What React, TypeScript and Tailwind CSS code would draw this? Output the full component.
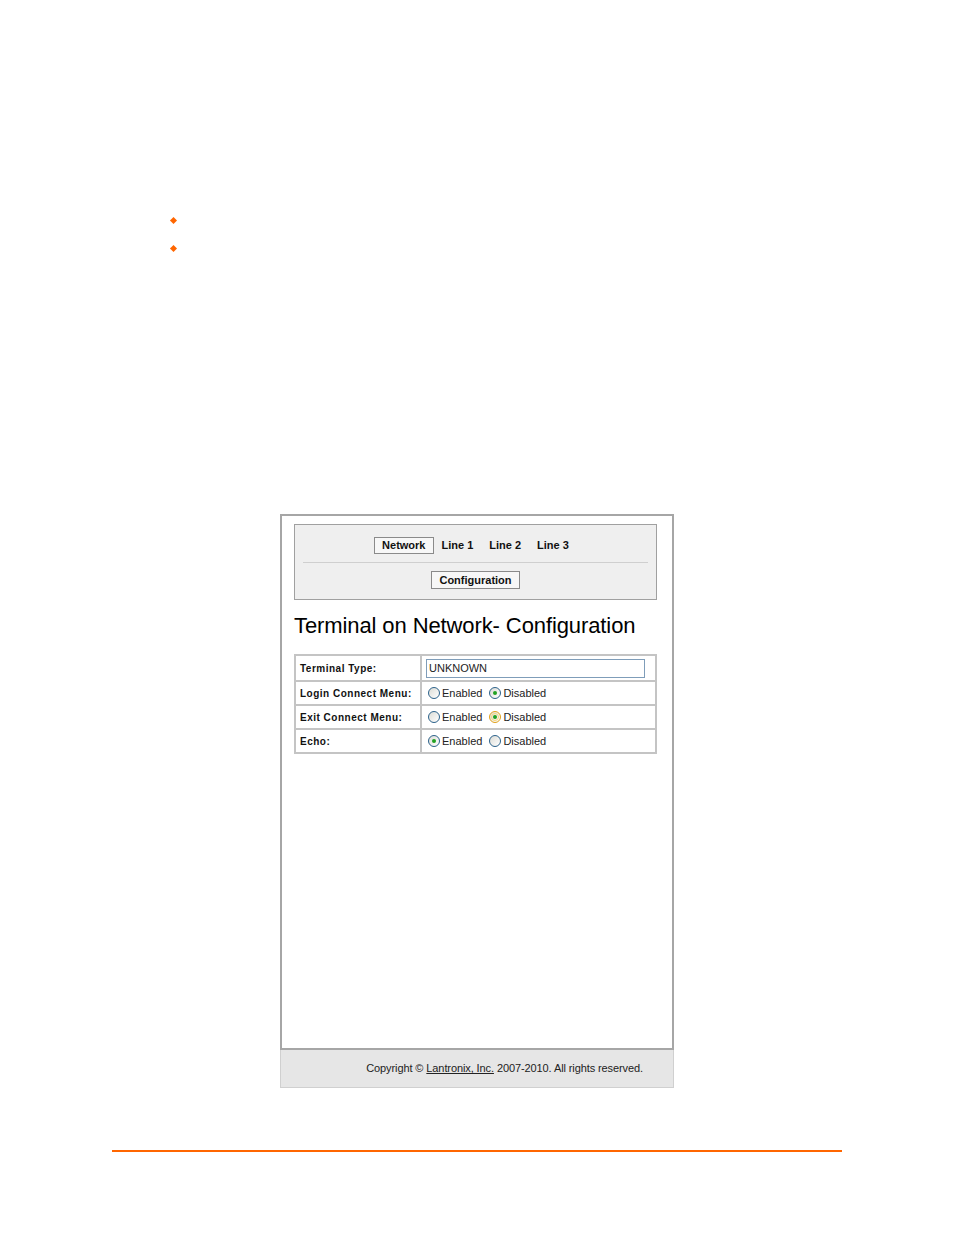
import React from 'react';

const sans = { fontFamily: '"Liberation Sans", Arial, sans-serif' };

type RadioProps = { checked?: boolean; hover?: boolean };

function Radio({ checked, hover }: RadioProps) {
  return (
    <span
      className={`relative flex h-[12px] w-[12px] shrink-0 items-center justify-center rounded-full border ${
        hover ? 'border-[#e3a21a]' : 'border-[#2c628b]'
      } bg-gradient-to-br from-[#dcdcd6] to-white`}
    >
      {hover && <span className="absolute inset-[1px] rounded-full border border-[#f8d575]" />}
      {checked && <span className="relative h-[4px] w-[4px] rounded-full bg-[#21a121]" />}
    </span>
  );
}

function RadioPair({ value, hover }: { value: 'on' | 'off'; hover?: boolean }) {
  return (
    <div className="flex items-center text-[11px] text-[#222]">
      <Radio checked={value === 'on'} />
      <span className="ml-[2px]">Enabled</span>
      <span className="ml-[7px] flex items-center">
        <Radio checked={value === 'off'} hover={hover} />
      </span>
      <span className="ml-[2px]">Disabled</span>
    </div>
  );
}

const rows = [
  { label: 'Login Connect Menu:', value: 'off' as const },
  { label: 'Exit Connect Menu:', value: 'off' as const, hover: true },
  { label: 'Echo:', value: 'on' as const },
];

export default function App() {
  return (
    <div className="min-h-[1235px] w-[954px] bg-white pt-[213px]" style={sans}>
      {/* bullets */}
      <ul className="pl-[171px]">
        <li className="h-[28px] pt-[5px]">
          <div className="h-[5px] w-[5px] rotate-45 bg-[#ff6600]" />
        </li>
        <li className="h-[28px] pt-[5px]">
          <div className="h-[5px] w-[5px] rotate-45 bg-[#ff6600]" />
        </li>
      </ul>

      {/* screenshot frame */}
      <div className="ml-[280px] mt-[245px] w-[394px]">
        <div className="h-[536px] border-2 border-[#a6a6a6] bg-white pl-[12px] pr-[15px] pt-[8px]">
          {/* nav box */}
          <div className="border border-[#a0a0a0] bg-[#efefef] px-[8px] pb-[10px] pt-[12px]">
            <div className="flex justify-center text-[11px] font-bold text-[#111]">
              <span className="h-[17px] border border-[#8a8a8a] bg-[#f7f7f7] px-[7px] leading-[15px]">Network</span>
              <span className="h-[17px] px-[8px] leading-[17px]">Line 1</span>
              <span className="h-[17px] px-[8px] leading-[17px]">Line 2</span>
              <span className="h-[17px] px-[8px] leading-[17px]">Line 3</span>
            </div>
            <div className="mt-[8px] h-px bg-[#cfcfcf]" />
            <div className="mt-[8px] flex justify-center text-[11px] font-bold text-[#111]">
              <span className="h-[18px] border border-[#8a8a8a] bg-[#f7f7f7] px-[7px] leading-[16px]">Configuration</span>
            </div>
          </div>

          <h1 className="mt-[13px] text-[22px] leading-[25px] tracking-[-0.1px] text-black">
            Terminal on Network- Configuration
          </h1>

          {/* config table */}
          <table className="mt-[16px] w-full border-collapse border-2 border-[#c4c4c4] text-left">
            <tbody>
              <tr className="h-[26px]">
                <td className="w-[126px] border-2 border-[#c4c4c4] pl-[4px] text-[10px] font-bold tracking-[0.5px] text-[#111]">
                  Terminal Type:
                </td>
                <td className="border-2 border-[#c4c4c4] pl-[4px] pr-[10px]">
                  <div className="h-[19px] border border-[#7f9db9] bg-white pl-[2px] text-[11px] leading-[17px] text-[#222]">
                    UNKNOWN
                  </div>
                </td>
              </tr>
              {rows.map((r) => (
                <tr key={r.label} className="h-[24px]">
                  <td className="border-2 border-[#c4c4c4] pl-[4px] text-[10px] font-bold tracking-[0.5px] text-[#111]">
                    {r.label}
                  </td>
                  <td className="border-2 border-[#c4c4c4] pl-[6px]">
                    <RadioPair value={r.value} hover={r.hover} />
                  </td>
                </tr>
              ))}
            </tbody>
          </table>
        </div>

        {/* footer */}
        <div className="flex h-[38px] items-center justify-end border border-t-0 border-[#d0d0d0] bg-[#e6e6e6] pr-[30px] text-[11px] tracking-[-0.1px] text-[#222]">
          <span>
            Copyright © <span className="underline">Lantronix, Inc.</span> 2007-2010. All rights reserved.
          </span>
        </div>
      </div>

      {/* orange rule */}
      <div className="ml-[112px] mt-[62px] h-[2px] w-[730px] bg-[#ff6600]" />
    </div>
  );
}
